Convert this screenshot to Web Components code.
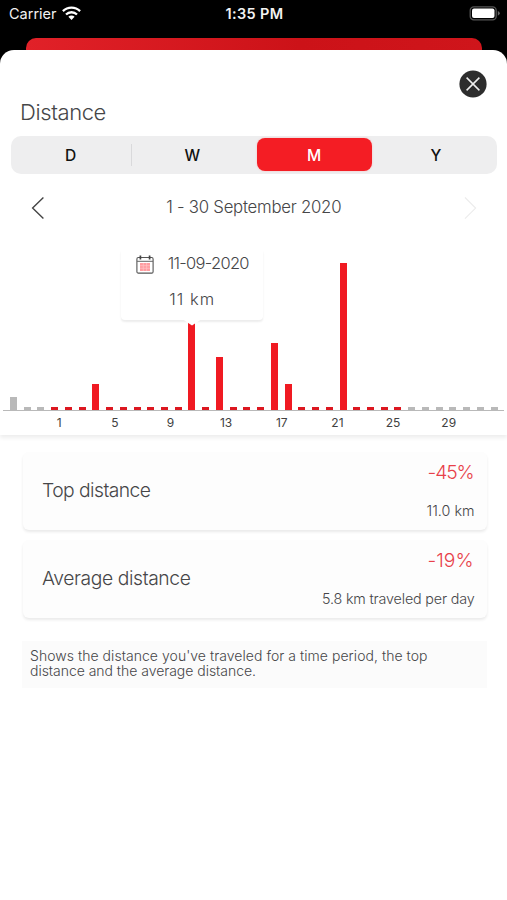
<!DOCTYPE html>
<html lang="en">
<head>
<meta charset="utf-8">
<title>Distance</title>
<style>
html,body{margin:0;height:900px;background:#000;overflow:hidden}
body{font-family:Inter,"Liberation Sans",sans-serif;color:#464648}
</style>
</head>
<body>
<distance-screen></distance-screen>
<script>
const define = (name, html, setup) => {
  const tpl = document.createElement('template');
  tpl.innerHTML = html.trim();
  customElements.define(name, class extends HTMLElement {
    constructor(){ super(); this.attachShadow({mode:'open'}).append(tpl.content.cloneNode(true)); }
    connectedCallback(){ if (setup) setup(this, this.shadowRoot); }
  });
};

// One line of text, tracked so that it spans the given width.
define('text-line', `
<style>:host{display:block;white-space:nowrap;width:max-content}</style><slot></slot>`, (el) => {
  const target = parseFloat(el.getAttribute('span'));
  const size = el.getAttribute('size');
  el.style.fontSize = size + 'px';
  el.style.fontWeight = el.getAttribute('weight') || 300;
  el.style.letterSpacing = '0';
  if (!target) return;
  const range = document.createRange();
  range.selectNodeContents(el);
  const w = range.getBoundingClientRect().width;
  const step = (target - w) / el.textContent.length;
  el.style.letterSpacing = step.toFixed(3) + 'px';
});

define('status-bar', `
<style>
:host{display:grid;grid-template-columns:1fr auto 1fr;align-items:center;box-sizing:border-box;height:28px;padding:0 7px 0 9px;color:#f2f2f2;line-height:28px}
.l{display:flex;align-items:center;gap:5px}
.r{display:flex;justify-content:flex-end}
svg{display:block}
</style>
<div class="l"><text-line size="14.5" weight="400" span="47.5">Carrier</text-line>
<svg width="19" height="14" viewBox="0 0 19 14" style="margin-top:-2px"><g fill="none" stroke="#fff" stroke-width="2.3"><path d="M.9 5.1a12.2 12.2 0 0 1 17.2 0"/><path d="M4 8.5a7.8 7.8 0 0 1 11 0"/></g><path d="M9.5 14 6.4 10.8a4.4 4.4 0 0 1 6.2 0z" fill="#fff"/></svg></div>
<text-line size="14.5" weight="600" span="58">1:35 PM</text-line>
<div class="r"><svg width="31" height="15" viewBox="0 0 31 15" style="margin-top:-2px"><rect x="1.2" y=".8" width="26" height="13" rx="3.6" fill="none" stroke="#555" stroke-width="1.3"/><rect x="3" y="2.5" width="22.5" height="9.6" rx="2" fill="#fff"/><path d="M28.8 5v4.7q2-1 2-2.35T28.8 5z" fill="#666"/></svg></div>`);

define('close-button', `
<style>:host{display:block;width:28px;height:28px}svg{display:block}</style>
<svg width="28" height="28" viewBox="0 0 28 28"><circle cx="14" cy="14" r="13.6" fill="#2d2d2d"/><path d="M7.6 7.6 20.4 20.4M20.4 7.6 7.6 20.4" stroke="#eee" stroke-width="1.5" fill="none"/></svg>`);

define('segment-item', `
<style>
:host{display:flex;align-items:center;justify-content:center;border-radius:8px;color:#111;line-height:31px;padding-top:2px;box-sizing:border-box;margin:2.3px 3.3px}
:host([selected]){background:#f41d24;color:#fff;box-shadow:0 0 2px #f9b5b7}
</style><text-line size="15.6" weight="500"><slot></slot></text-line>`);

define('segment-control', `
<style>
:host{display:grid;grid-template-columns:119.5px 1px 1fr 121.8px 122px;height:37.6px;background:#eeeeef;border-radius:10px;box-sizing:border-box}
i{background:#d9d9db;margin:8px 0}
</style>
<segment-item>D</segment-item><i></i><segment-item>W</segment-item><segment-item selected>M</segment-item><segment-item>Y</segment-item>`);

define('period-nav', `
<style>
:host{display:flex;justify-content:space-between;align-items:center;height:66px;padding:0 30.5px 0 31px;line-height:24px}
svg{display:block;fill:none}
</style>
<svg width="14" height="24" viewBox="0 0 14 24" style="margin-top:3px"><path d="M12.4 1.5 1.6 12.1 12.4 22.6" stroke="#444" stroke-width="1.4"/></svg>
<text-line size="16.8" span="175">1 - 30 September 2020</text-line>
<svg width="14" height="24" viewBox="0 0 14 24" style="margin-top:3px"><path d="M2 1.5 12.6 12.1 2 22.6" stroke="#ececec" stroke-width="1.2"/></svg>`);

define('chart-tooltip', `
<style>
:host{display:flex;flex-direction:column;align-items:center;box-sizing:border-box;width:142px;height:70px;background:#fff;border-radius:0 0 4px 4px;box-shadow:0 2px 2px #ededed}
.top{display:flex;align-items:center;gap:13.5px;height:26px;line-height:26px;align-self:flex-start;padding-left:15px}
.v{line-height:24px;margin-top:11px}
svg{display:block}
.tip{position:absolute;left:62px;top:68.5px}
</style>
<div class="top">
<svg width="18" height="19" viewBox="0 0 18 19" style="margin-top:3px"><rect x=".9" y="2.5" width="16.2" height="15.6" rx="1.4" fill="#fff" stroke="#555" stroke-width="1.1"/><path d="M1 6.3h16" stroke="#666"/><path d="M4.4.4v4M13.6.4v4" stroke="#444" stroke-width="1.7"/><path d="M4 8h10v8H4z" fill="#ff9ca0"/><path d="M7.3 8v8M10.6 8v8M4 10.7h10M4 13.3h10" stroke="#ffc4c5" stroke-width=".7"/></svg>
<text-line size="16.5" span="81">11-09-2020</text-line></div>
<text-line class="v" size="16.5" span="46">11 km</text-line>
<svg class="tip" width="18" height="8" viewBox="0 0 18 8"><path d="M0 0h18v1.5L9 7.5 0 1.5z" fill="#fff"/></svg>`);

define('bar-chart', `
<style>
:host{display:block;position:relative;height:195.2px;background:#fff;box-shadow:0 3px 4px #eee}
.plot{display:grid;grid-template-columns:repeat(36,1fr);align-items:end;justify-items:center;height:171.6px;margin:0 3px;padding:0 3px 0 3.6px;box-sizing:border-box;border-bottom:1px solid #b9b9b9}
.plot i{width:7px;background:#f01a22}
.plot i.s{background:#dc1720}
.plot i.g{background:#b9b9b9}
.axis{display:grid;grid-template-columns:repeat(8,55.65px);margin-left:31.4px;line-height:24px;justify-items:center;color:#414141}
chart-tooltip{position:absolute;left:121.3px;top:10px}
</style>
<div class="plot"></div><div class="axis"></div><chart-tooltip></chart-tooltip>`, (el, root) => {
  const tall = {0:13.2, 6:26.7, 13:88, 15:53.5, 19:67, 20:26.7, 24:147.3};
  const plot = root.querySelector('.plot'), axis = root.querySelector('.axis');
  for (let i = 0; i < 36; i++) {
    const b = document.createElement('i');
    b.style.height = (tall[i] || 3.3) + 'px';
    if (i < 3 || i > 28) b.className = 'g'; else if (!tall[i]) b.className = 's';
    plot.append(b);
  }
  for (let d = 1; d <= 29; d += 4) {
    const t = document.createElement('text-line');
    t.setAttribute('size', '12'); t.setAttribute('weight', '400');
    t.textContent = d;
    axis.append(t);
  }
});

define('stat-card', `
<style>
:host{display:flex;justify-content:space-between;box-sizing:border-box;height:77.6px;padding:0 12px 0 19.5px;background:#fdfdfd;border-radius:6px;box-shadow:0 2px 3px #eaeaea}
.n{line-height:77px}
.r{display:flex;flex-direction:column;align-items:flex-end;padding-top:8px}
.c{color:#e8414a;line-height:25px;margin-right:1px}
.v{line-height:24px;margin-top:14px}
</style>
<div class="n"><slot name="name"></slot></div>
<div class="r"><div class="c"><slot name="change"></slot></div><div class="v"><slot name="value"></slot></div></div>`);

define('info-note', `
<style>:host{display:block;box-sizing:border-box;height:47px;padding:8.2px 8px 0;background:#fbfbfb;line-height:14.8px}</style><slot></slot>`);

define('distance-screen', `
<style>
:host{display:flex;flex-direction:column;height:900px;background:#000}
.back{margin:9.6px 25px 0 26px;height:12.2px;background:linear-gradient(90deg,#e12128,#cc1218 60%,#cf151b);border-radius:10px 10px 0 0}
.sheet{flex:1;background:#fff;border-radius:14px 14px 0 0;box-sizing:border-box;padding-top:20px}
header{display:flex;justify-content:space-between;height:66.4px;padding:0 20.5px 0 20px}
header text-line{line-height:28px;margin-top:28.5px}
segment-control{margin:0 10px 0 11px}
.cards{display:flex;flex-direction:column;gap:10.4px;margin:17.5px 20.5px 0 22.5px}
info-note{margin:23px 20px 0 22px}
</style>
<status-bar></status-bar>
<div class="back"></div>
<main class="sheet">
<header><text-line size="22" span="86">Distance</text-line><close-button></close-button></header>
<segment-control></segment-control>
<period-nav></period-nav>
<bar-chart></bar-chart>
<section class="cards">
<stat-card><text-line slot="name" size="19.3" span="108.5">Top distance</text-line><text-line slot="change" size="19.3" span="46">-45%</text-line><text-line slot="value" size="14.3" span="48">11.0 km</text-line></stat-card>
<stat-card><text-line slot="name" size="19.3" span="148.5">Average distance</text-line><text-line slot="change" size="19.3" span="46">-19%</text-line><text-line slot="value" size="14.3" span="152.5">5.8 km traveled per day</text-line></stat-card>
</section>
<info-note><text-line size="14" span="397.5">Shows the distance you've traveled for a time period, the top</text-line><text-line size="14" span="226">distance and the average distance.</text-line></info-note>
</main>`);
</script>
</body>
</html>
